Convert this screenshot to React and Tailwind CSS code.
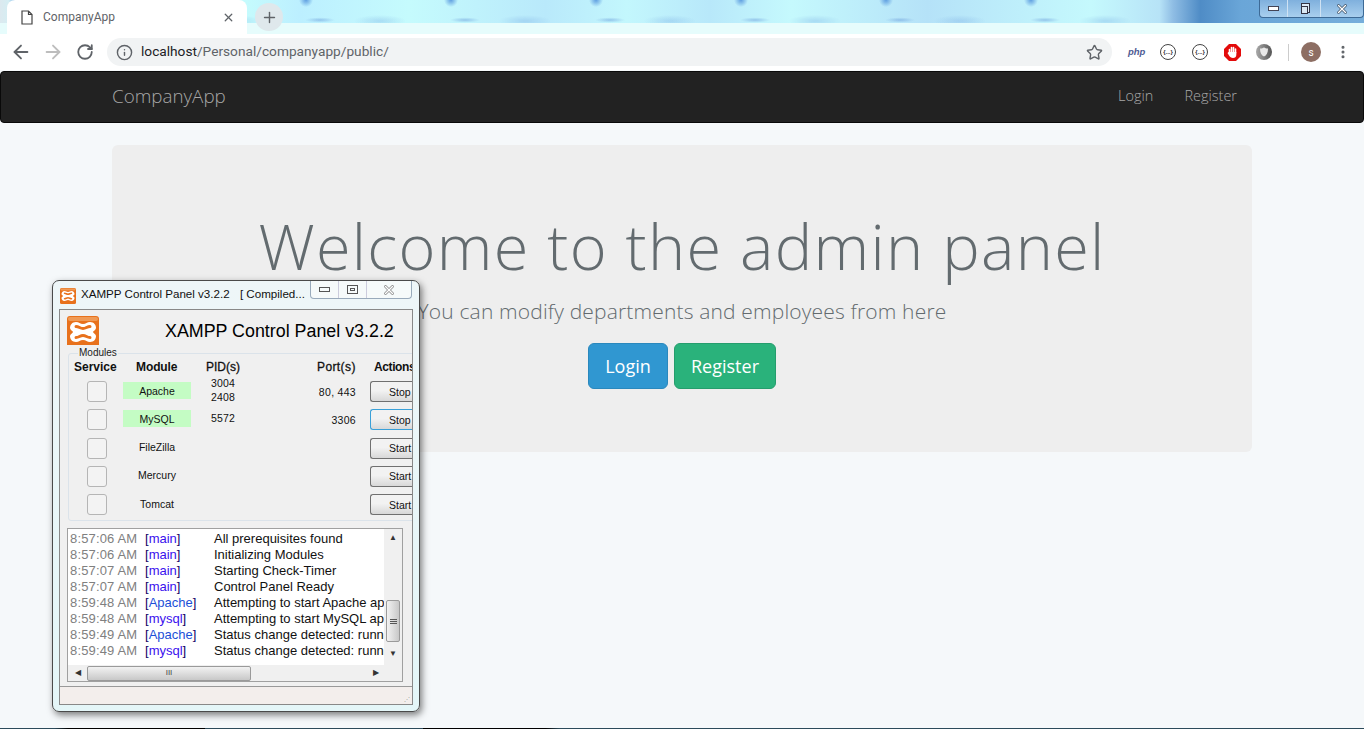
import { ArrowLeft, ArrowRight, RotateCw, Info, Star, X, Plus, EllipsisVertical } from 'lucide-react';

const modules = [
  { name: 'Apache', pids: ['3004', '2408'], ports: '80, 443', action: 'Stop', on: true },
  { name: 'MySQL', pids: ['5572'], ports: '3306', action: 'Stop', on: true, focused: true },
  { name: 'FileZilla', pids: [], ports: '', action: 'Start' },
  { name: 'Mercury', pids: [], ports: '', action: 'Start' },
  { name: 'Tomcat', pids: [], ports: '', action: 'Start' },
];

const logs = [
  ['8:57:06 AM', 'main', 'All prerequisites found'],
  ['8:57:06 AM', 'main', 'Initializing Modules'],
  ['8:57:07 AM', 'main', 'Starting Check-Timer'],
  ['8:57:07 AM', 'main', 'Control Panel Ready'],
  ['8:59:48 AM', 'Apache', 'Attempting to start Apache app...'],
  ['8:59:48 AM', 'mysql', 'Attempting to start MySQL app...'],
  ['8:59:49 AM', 'Apache', 'Status change detected: running'],
  ['8:59:49 AM', 'mysql', 'Status change detected: running'],
];

function XamppLogo({ size }) {
  return (
    <svg width={size} height={size} viewBox="0 0 32 32" className="shrink-0">
      <rect x="0" y="0" width="32" height="32" rx="3" fill="#e8711c" />
      <rect x="1" y="1" width="30" height="4" rx="2" fill="#f09a55" />
      <path
        d="M9 6 C12 6 13 8 16 8 C19 8 20 6 23 6 C27 6 29 9 29 12 C29 14 26 15 26 16 C26 17 29 18 29 20 C29 23 27 26 23 26 C20 26 19 24 16 24 C13 24 12 26 9 26 C5 26 3 23 3 20 C3 18 6 17 6 16 C6 15 3 14 3 12 C3 9 5 6 9 6 Z"
        fill="#fff"
      />
      <path
        d="M9 10.5 C12 10.5 13 12.5 16 12.5 C19 12.5 20 10.5 23 10.5 M9 21.5 C12 21.5 13 19.5 16 19.5 C19 19.5 20 21.5 23 21.5"
        stroke="#e8711c"
        strokeWidth="3"
        strokeLinecap="round"
        fill="none"
      />
    </svg>
  );
}

function CodeExt() {
  return (
    <div className="w-4 h-4 rounded-full border border-[#444] flex items-center justify-center text-[6px] leading-none font-bold text-[#333] font-['Liberation_Sans',sans-serif]">
      {'{...}'}
    </div>
  );
}

function OutlinedX({ size, fill, outline }) {
  return (
    <div className="grid place-items-center">
      <X size={size} strokeWidth={4.5} style={{ color: outline }} className="[grid-area:1/1]" />
      <X size={size} strokeWidth={2.4} style={{ color: fill }} className="[grid-area:1/1]" />
    </div>
  );
}

function BrowserChrome() {
  return (
    <div className="shrink-0 font-['Roboto',sans-serif]">
      <div className="h-[34px] relative bg-[linear-gradient(90deg,#dce9ef_0%,#c5f8fb_2%,#c5fbfd_18%,#bcefff_22%,#c5fbfd_30%,#b9e9fb_40%,#c3f7fd_46%,#b8e8fa_52%,#c5f9fd_58%,#b5e2f8_68%,#c5f9fd_80%,#b7e3f7_85%,#8fbde4_86%,#4f8cc6_88%,#6aa6d8_91%,#76aedb_100%)]">
        <div className="absolute left-0 top-0 w-[1170px] h-[23px] bg-[radial-gradient(circle_at_16px_0px,#5f9fe0_0px,rgba(95,159,224,0)_7px),radial-gradient(ellipse_at_30px_20px,rgba(110,160,220,0.55)_0px,rgba(110,160,220,0)_15px),radial-gradient(ellipse_at_90px_21px,rgba(120,170,225,0.35)_0px,rgba(120,170,225,0)_26px)] bg-[length:145px_23px]" />
        <div className="absolute left-0 right-0 bottom-0 h-[11px] bg-[#e6fcfc]" />
        <div className="absolute left-[7px] top-0 w-[240px] h-[34px] bg-white rounded-t-lg flex items-center pl-[14px] pr-[12px] text-[12px] text-[#5f6368]">
          <svg width="12" height="15" viewBox="0 0 12 15" fill="none" stroke="#444" strokeWidth="1.2" className="mr-[10px]">
            <path d="M1 1 H7.5 L11 4.5 V14 H1 Z M7.5 1 V4.5 H11" />
          </svg>
          <span className="flex-1">CompanyApp</span>
          <X size={13} strokeWidth={2.4} className="text-[#5f6368]" />
        </div>
        <div className="absolute left-[255px] top-[3px] w-7 h-7 rounded-full bg-[#dfe8ec] flex items-center justify-center">
          <Plus size={17} strokeWidth={2} className="text-[#5f6368]" />
        </div>
        <div className="absolute right-0 top-0 w-[105px] h-[18px] flex rounded-b-[4px] border border-t-0 border-[#3d6a96] bg-[linear-gradient(180deg,#7fb0dd,#a9cfee)]">
          <div className="w-[28px] flex items-center justify-center border-r border-[#cfe2f3]">
            <div className="w-[11px] h-[5px] bg-white border border-[#445]" />
          </div>
          <div className="w-[33px] flex items-center justify-center border-r border-[#cfe2f3]">
            <div className="w-[9px] h-[10px] bg-white/70 border border-[#334] -mr-[2px] -mt-[2px]">
            </div>
            <div className="w-[7px] h-[8px] bg-[#dbe8f3] border border-[#334] -ml-[7px] mt-[2px]" />
          </div>
          <div className="flex-1 flex items-center justify-center">
            <OutlinedX size={14} fill="#fff" outline="#36495e" />
          </div>
        </div>
      </div>
      <div className="h-[36px] bg-white flex items-center text-[#5f6368]">
        <div className="w-[107px] flex items-center shrink-0 pl-[5px]">
          <div className="w-[32px] flex justify-center"><ArrowLeft size={22} strokeWidth={2} /></div>
          <div className="w-[32px] flex justify-center"><ArrowRight size={22} strokeWidth={2} className="text-[#bdbdbd]" /></div>
          <div className="w-[32px] flex justify-center"><RotateCw size={18} strokeWidth={2.4} /></div>
        </div>
        <div className="w-[1005px] h-[28px] rounded-full bg-[#f1f3f4] flex items-center pl-[9px] pr-[9px]">
          <Info size={17} strokeWidth={2} className="mr-[8px]" />
          <span className="flex-1 text-[13.7px] leading-none">
            <span className="text-[#202124]">localhost</span>/Personal/companyapp/public/
          </span>
          <Star size={17} strokeWidth={2} />
        </div>
        <div className="flex-1 flex items-center pl-[16px]">
          <span className="w-[32px] text-[9.5px] font-bold italic text-[#4f5b93] font-['Liberation_Sans',sans-serif]">php</span>
          <div className="w-[32px]"><CodeExt /></div>
          <div className="w-[32px]"><CodeExt /></div>
          <div className="w-[32px]">
            <svg width="17" height="17" viewBox="0 0 17 17">
              <path d="M5 0 H12 L17 5 V12 L12 17 H5 L0 12 V5 Z" fill="#e30b0b" />
              <path d="M5.5 9 V5.5 M7.5 8 V3.5 M9.5 8 V3.5 M11.5 9 V5" stroke="#fff" strokeWidth="1.6" strokeLinecap="round" />
              <path d="M4.6 8 H12.3 V11 C12.3 13 11 14 9 14 C7 14 6 13 5 11.5 L3.5 9 Z" fill="#fff" />
            </svg>
          </div>
          <div className="w-4 h-4 rounded-full bg-[linear-gradient(90deg,#aaa,#555)] flex items-center justify-center">
            <svg width="10" height="10" viewBox="0 0 10 10">
              <path d="M1 1.5 C3 1.5 4 1 5 0.5 C6 1 7 1.5 9 1.5 C9 6 7.5 8.5 5 9.5 C2.5 8.5 1 6 1 1.5 Z" fill="#e8e8e8" />
            </svg>
          </div>
          <div className="w-px h-[17px] bg-[#ccc] ml-[16px] mr-[12px]" />
          <div className="w-5 h-5 rounded-full bg-[#8d6e63] text-white text-[10px] flex items-center justify-center">s</div>
          <EllipsisVertical size={16} strokeWidth={2.6} className="ml-[14px] text-[#5f6368]" />
        </div>
      </div>
    </div>
  );
}

function ModuleRow({ mod }) {
  return (
    <div className="h-[28.25px] flex items-start text-[10.5px] leading-[14px] text-[#111]">
      <div className="w-[20px] h-[21px] ml-[18px] rounded-[3px] border border-[#b5b5b5] bg-[#f3f3f3] shrink-0" />
      <div className={`w-[68px] h-[17px] ml-[16px] mt-px shrink-0 flex items-center justify-center ${mod.on ? 'bg-[#c4fcc4]' : ''}`}>
        {mod.name}
      </div>
      <div className={`w-[40px] ml-[20px] shrink-0 tracking-[0.2px] ${mod.pids.length > 1 ? '-mt-[5px]' : 'mt-[2px]'}`}>
        {mod.pids.map((p) => (
          <div key={p}>{p}</div>
        ))}
      </div>
      <div className="w-[105px] text-right mt-[4px] shrink-0 tracking-[0.3px]">{mod.ports}</div>
      <div
        className={`w-[50px] h-[21px] ml-[14px] shrink-0 rounded-l-[3px] border border-r-0 flex items-center pl-[18px] bg-[linear-gradient(180deg,#f2f2f2_45%,#d8d8d8)] ${mod.focused ? 'border-[#3aa0d8]' : 'border-[#707070]'}`}
      >
        {mod.action}
      </div>
    </div>
  );
}

function LogPanel() {
  return (
    <div className="ml-[7px] mt-[7px] w-[336px] h-[154px] border border-[#a0a0a0] bg-[#f0f0f0] flex flex-col shrink-0">
      <div className="flex h-[136px]">
        <div className="w-[316px] bg-white pt-[2px] overflow-hidden font-['Liberation_Sans',sans-serif] text-[13px] leading-[16px]">
          {logs.map(([time, tag, msg], i) => (
            <div key={i} className="flex whitespace-nowrap pl-[2px]">
              <span className="w-[75px] shrink-0 text-[#808080] tracking-[0.15px]">{time}</span>
              <span className="w-[69px] shrink-0 text-[#110066]">
                [<span className={tag === 'Apache' ? 'text-[#1c4fd8]' : 'text-[#3a10ee]'}>{tag}</span>]
              </span>
              <span className="text-[#111]">{msg}</span>
            </div>
          ))}
        </div>
        <div className="flex-1 flex flex-col items-center bg-[#f0f0f0]">
          <div className="h-[17px] flex items-center text-[8px] text-[#333] leading-none">▲</div>
          <div className="h-[42px] shrink-0" />
          <div className="w-[14px] h-[42px] mt-[12px] rounded-[2px] border border-[#9a9a9a] bg-[linear-gradient(90deg,#f2f2f2,#c8c8c8)] flex flex-col items-center justify-center gap-px">
            <div className="w-[7px] h-px bg-[#555]" />
            <div className="w-[7px] h-px bg-[#555]" />
            <div className="w-[7px] h-px bg-[#555]" />
          </div>
          <div className="flex-1 flex items-center text-[8px] text-[#333] leading-none">▼</div>
        </div>
      </div>
      <div className="flex-1 flex items-center bg-[#f0f0f0]">
        <div className="w-[19px] text-center text-[8px] text-[#333] leading-none">◀</div>
        <div className="w-[164px] h-[15px] rounded-[2px] border border-[#9a9a9a] bg-[linear-gradient(180deg,#f2f2f2,#c8c8c8)] flex items-center justify-center text-[8px] leading-none text-[#444]">
          III
        </div>
        <div className="w-[128px] text-right text-[8px] text-[#333] leading-none">▶</div>
      </div>
    </div>
  );
}

function XamppWindow() {
  return (
    <div className="absolute left-[52px] top-[280px] w-[368px] h-[432px] rounded-[7px] border border-[#4a4a4a] bg-[linear-gradient(180deg,#eef6f8,#e4f6f8)] shadow-[2px_3px_7px_rgba(0,0,0,0.5)] px-[6px] font-['Liberation_Sans',sans-serif] flex flex-col">
      <div className="h-[28px] shrink-0 flex items-start relative">
        <div className="mt-[7px] ml-[1px] mr-[5px]"><XamppLogo size={16} /></div>
        <div className="mt-[5px] text-[11.6px] leading-[16px] text-[#111] whitespace-nowrap">
          XAMPP Control Panel v3.2.2 <span className="ml-[7px]">[ Compiled...</span>
        </div>
        <div className="absolute right-px top-0 w-[102px] h-[18px] flex border border-t-0 border-[#9ab] rounded-b-[4px] bg-[#f6fafa]">
          <div className="w-[28px] flex items-center justify-center border-r border-[#ccd]">
            <div className="w-[11px] h-[5px] border border-[#555]" />
          </div>
          <div className="w-[28px] flex items-center justify-center border-r border-[#ccd]">
            <div className="w-[11px] h-[9px] border border-[#555] flex items-center justify-center">
              <div className="w-[5px] h-[3px] border border-[#555]" />
            </div>
          </div>
          <div className="flex-1 flex items-center justify-center">
            <OutlinedX size={14} fill="#fff" outline="#777" />
          </div>
        </div>
      </div>
      <div className="w-[354px] h-[396px] border border-[#888] bg-[#f0f0f0] flex flex-col overflow-hidden">
        <div className="h-[43px] shrink-0 flex items-start relative">
          <div className="ml-[7px] mt-[6px] h-[29px] overflow-hidden"><XamppLogo size={32} /></div>
          <div className="ml-[66px] mt-[10px] text-[17.85px] leading-[22px] text-black whitespace-nowrap">XAMPP Control Panel v3.2.2</div>
        </div>
        <div className="ml-[8px] w-[350px] h-[168px] shrink-0 border border-[#dbe3ea] rounded-[3px] relative">
          <div className="absolute left-[9px] -top-[7px] px-px bg-[#f0f0f0] text-[10px] leading-[12px] text-[#222]">Modules</div>
          <div className="h-[27px] flex items-end pb-[7px] text-[12px] leading-[14px] font-bold text-[#111]">
            <div className="w-[5px] shrink-0" />
            <div className="w-[62px] shrink-0">Service</div>
            <div className="w-[70px] shrink-0 tracking-[-0.1px]">Module</div>
            <div className="w-[111px] shrink-0 font-normal [-webkit-text-stroke:0.3px_#111]">PID(s)</div>
            <div className="w-[57px] shrink-0 font-normal tracking-[0.4px] [-webkit-text-stroke:0.3px_#111]">Port(s)</div>
            <div className="whitespace-nowrap tracking-[-0.4px]">Actions</div>
          </div>
          {modules.map((m) => <ModuleRow key={m.name} mod={m} />)}
        </div>
        <LogPanel />
        <div className="mt-[4px] flex-1 border-t border-[#999] bg-[#f3eeec] flex items-end justify-end pr-[2px] pb-[2px] text-[6px] leading-none text-[#999]">⋰</div>
      </div>
    </div>
  );
}

export default function App() {
  return (
    <div className="relative w-[1364px] h-[729px] overflow-hidden flex flex-col bg-[#f5f8fa] font-['Open_Sans',sans-serif]">
      <BrowserChrome />
      <nav className="h-[52px] mt-px shrink-0 bg-[#222] border border-[#090909] rounded-[4px] flex items-center pl-[111px] pr-[126px] text-[#a8a8a8] font-light">
        <span className="text-[18.8px] -mt-[2px]">CompanyApp</span>
        <div className="ml-auto flex gap-[31px] text-[14.5px] -mt-[2px]">
          <span>Login</span>
          <span>Register</span>
        </div>
      </nav>
      <main className="flex-1 px-[112px] pt-[22px]">
        <div className="h-[307px] rounded-[6px] bg-[#eee] flex flex-col items-center pt-[58px] text-[#636b6f]">
          <h1 className="text-[63px] leading-[85px] font-light whitespace-nowrap tracking-[1.3px]">Welcome to the admin panel</h1>
          <p className="mt-[8px] text-[21px] leading-[30px] font-light whitespace-nowrap tracking-[0.16px]">You can modify departments and employees from here</p>
          <div className="mt-[17px] flex gap-[6px] text-[18px] text-white font-normal">
            <div className="w-[80px] h-[46px] rounded-[6px] bg-[#3097d1] border border-[#2a88bd] flex items-center justify-center">Login</div>
            <div className="w-[102px] h-[46px] rounded-[6px] bg-[#2ab27b] border border-[#259d6d] flex items-center justify-center">Register</div>
          </div>
        </div>
      </main>
      <div className="h-px shrink-0 bg-[linear-gradient(90deg,#2c4a5a_4%,#000_5%,#000_15%,#2c4a5a_15%,#2c4a5a_31%,#000_31%,#000_40%,#2c4a5a_41%)]" />
      <XamppWindow />
    </div>
  );
}
